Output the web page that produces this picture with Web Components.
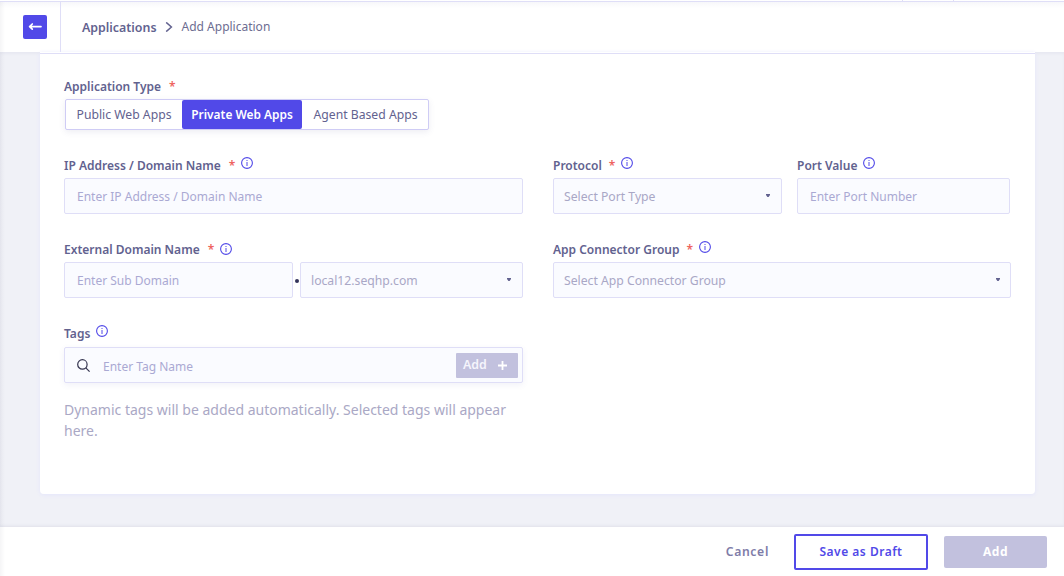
<!DOCTYPE html>
<html lang="en">
<head>
<meta charset="utf-8">
<title>Add Application</title>
<style>
    html, body {
        margin: 0;
        height: 576px;
        overflow: hidden;
    }
    body {
        --primary: #5149e8;
        --text: #62628f;
        --muted: #a9a7c6;
        --line: #dfdef7;
        --field: #fafbff;
        --disabled: #c2c1de;
        background: #f0f1f7;
        color: var(--text);
        font-family: "Noto Sans", sans-serif;
        font-size: 12px;
    }
</style>
</head>
<body>
<app-page>
    <page-header slot="header" parent="Applications" current="Add Application"></page-header>

    <form-field class="type" label="Application Type" required no-info>
        <segmented-control>
            <segment-item>Public Web Apps</segment-item>
            <segment-item selected>Private Web Apps</segment-item>
            <segment-item>Agent Based Apps</segment-item>
        </segmented-control>
    </form-field>

    <form-row>
        <form-field label="IP Address / Domain Name" required style="width:459px">
            <text-box>Enter IP Address / Domain Name</text-box>
        </form-field>
        <form-field label="Protocol" required style="width:229px; --star-gap:7px">
            <select-box>Select Port Type</select-box>
        </form-field>
        <form-field label="Port Value" style="width:213px; margin-left:-15px">
            <text-box>Enter Port Number</text-box>
        </form-field>
    </form-row>

    <form-row>
        <form-field label="External Domain Name" required style="width:459px; --info-y:2px">
            <domain-parts>
                <text-box style="width:229px">Enter Sub Domain</text-box>
                <select-box style="width:223px">local12.seqhp.com</select-box>
            </domain-parts>
        </form-field>
        <form-field label="App Connector Group" required style="width:458px; --star-gap:7px">
            <select-box style="padding-right:10px">Select App Connector Group</select-box>
        </form-field>
    </form-row>

    <form-row>
        <form-field label="Tags" style="width:459px">
            <tag-input>Enter Tag Name</tag-input>
        </form-field>
    </form-row>
    <tag-hint>Dynamic tags will be added automatically. Selected tags will appear here.</tag-hint>

    <page-footer slot="footer">
        <action-button kind="text">Cancel</action-button>
        <action-button kind="outline">Save as Draft</action-button>
        <action-button kind="disabled">Add</action-button>
    </page-footer>
</app-page>

<script>
class BaseElement extends HTMLElement {
    constructor() {
        super();
        this.attachShadow({mode: "open"});
    }

    connectedCallback() {
        const template = document.createElement("template");
        template.innerHTML = `<style>:host{box-sizing:border-box} *{box-sizing:border-box}${this.getStyle()}</style>${this.getMarkup()}`;
        this.shadowRoot.replaceChildren(template.content.cloneNode(true));
    }

    getStyle() {
        return "";
    }

    getMarkup() {
        return "<slot></slot>";
    }
}

class AppPage extends BaseElement {
    getStyle() {
        return `
            :host { display: flex; flex-direction: column; height: 576px; position: relative; }
            main { flex: 1; padding: 0 29px 0 40px; box-shadow: inset 0 2px 3px rgba(80,80,140,.05); }
            .card {
                height: 442px;
                padding: 0 24px;
                background: linear-gradient(#fff 1px, var(--line) 1px, var(--line) 2px, #fff 2px);
                border-radius: 0 0 4px 4px;
                box-shadow: 0 1px 4px #e4e5fb;
            }
            .edge {
                position: absolute;
                inset: 2px auto 0 0;
                width: 5px;
                background: linear-gradient(90deg, rgba(60,60,90,.05), transparent);
            }
        `;
    }

    getMarkup() {
        return `
            <slot name="header"></slot>
            <main><div class="card"><slot></slot></div></main>
            <slot name="footer"></slot>
            <div class="edge"></div>
        `;
    }
}

class PageHeader extends BaseElement {
    getStyle() {
        return `
            :host { display: block; height: 52px; background: #fff; }
            .strip { height: 2px; border-bottom: 1px solid var(--line); display: flex; padding-left: 902px; gap: 50px; }
            .strip i { width: 1px; height: 1px; background: var(--line); }
            .bar { display: flex; align-items: center; height: 50px; background: linear-gradient(#f7f7fa, #fff 6px); }
            .back { width: 61px; height: 50px; padding: 13px 0 0 23px; border-right: 1px solid var(--line); }
            svg { display: block; }
            .back svg { border-radius: 2px; background: var(--primary); }
            nav { display: flex; align-items: center; padding-left: 21px; line-height: 18px; }
            b { font-weight: 600; font-size: 12.4px; margin-top: 2px; }
            nav svg { margin: 0 9px 0 8px; }
            .current { color: #6d6d91; }
        `;
    }

    getMarkup() {
        return `
            <div class="strip"><i></i><i></i></div>
            <div class="bar">
                <div class="back">
                    <svg width="24" height="24" viewBox="0 0 24 24" fill="none" stroke="#fff" stroke-width="1.7" stroke-linecap="round" stroke-linejoin="round"><path d="M18 11.6H6.8M9.3 9l-2.7 2.6 2.7 2.6"/></svg>
                </div>
                <nav>
                    <b>${this.getAttribute("parent")}</b>
                    <svg width="8" height="10" viewBox="0 0 8 10" fill="none" stroke="#62628f" stroke-width="1.5"><path d="M1.2 .4L6.4 5 1.2 9.6"/></svg>
                    <span class="current">${this.getAttribute("current")}</span>
                </nav>
            </div>
        `;
    }
}

class FormField extends BaseElement {
    getStyle() {
        return `
            :host { display: block; }
            :host(.type) { padding-top: 23px; }
            .label { display: flex; height: 24px; font-weight: 600; line-height: 24px; white-space: nowrap; }
            .star { color: #ee6460; margin-left: var(--star-gap, 8px); font-weight: 600; }
            .info { margin: 3px 0 0 6px; position: relative; top: var(--info-y, 0); }
        `;
    }

    getMarkup() {
        const star = this.hasAttribute("required") ? `<span class="star">*</span>` : "";
        const info = this.hasAttribute("no-info") ? "" : `
            <svg class="info" width="12" height="12" viewBox="0 0 12 12" fill="none" stroke="#5149e8">
                <circle cx="6" cy="6" r="5.4" stroke-width="1.1"/>
                <path d="M6 5v4M6 3v1" stroke-width="1"/>
            </svg>`;
        return `<div class="label"><span>${this.getAttribute("label")}</span>${star}${info}</div><slot></slot>`;
    }
}

class FormRow extends BaseElement {
    getStyle() {
        return `:host { display: flex; gap: 30px; height: 60px; margin-top: 24px; }`;
    }
}

class SegmentedControl extends BaseElement {
    getStyle() {
        return `
            :host {
                display: flex;
                width: 364px;
                height: 31px;
                margin-left: 1px;
                border: 1px solid #cfccf5;
                border-radius: 2px;
                background: #fff;
                box-shadow: 0 2px 6px rgba(80,80,140,.1);
            }
        `;
    }
}

class SegmentItem extends BaseElement {
    getStyle() {
        return `
            :host { flex: 0 0 116px; text-align: center; font-size: 12.2px; line-height: 30px; white-space: nowrap; }
            :host([selected]) { flex-basis: 120px; background: var(--primary); color: #fff; font-size: 11.9px; font-weight: 600; line-height: 28px; border-radius: 2px; }
            :host(:last-child) { flex: 1; padding-left: 1px; }
        `;
    }
}

class TextBox extends BaseElement {
    getStyle() {
        return `
            :host {
                display: flex;
                align-items: center;
                height: 36px;
                padding: 0 12px;
                border: 1px solid var(--line);
                border-radius: 2px;
                background: var(--field);
                color: #aaa9d3;
                line-height: 18px;
                white-space: nowrap;
            }
            .value { padding-top: 2px; }
        `;
    }

    getMarkup() {
        return `<span class="value"><slot></slot></span>`;
    }
}

class SelectBox extends TextBox {
    getStyle() {
        return super.getStyle() + `
            :host { padding: 0 11px 0 10px; justify-content: space-between; font-size: 12.2px; color: var(--muted); }
            svg { margin-bottom: 1px; }
        `;
    }

    getMarkup() {
        return super.getMarkup() + `<svg width="4" height="3" viewBox="0 0 4 3"><path d="M0 0h4v1L2.6 3H1.4L0 1z" fill="#62628f"/></svg>`;
    }
}

class DomainParts extends BaseElement {
    getStyle() {
        return `
            :host { display: grid; grid-template-columns: 229px 7px 223px; }
            .dot { grid-column: 2; grid-row: 1; width: 4px; height: 4px; margin: 17px 0 0 2px; border-radius: 50%; background: #33335a; }
            ::slotted(text-box) { grid-column: 1; grid-row: 1; }
            ::slotted(select-box) { grid-column: 3; grid-row: 1; }
        `;
    }

    getMarkup() {
        return `<slot></slot><span class="dot"></span>`;
    }
}

class TagInput extends TextBox {
    getStyle() {
        return super.getStyle() + `
            :host { margin-top: 1px; padding: 0 4px 0 12px; box-shadow: 0 2px 6px rgba(80,80,160,.08); }
            .text { flex: 1; padding: 3px 0 0 13px; }
            .add {
                display: flex;
                align-items: center;
                width: 62px;
                height: 25px;
                padding: 0 11px 0 7px;
                justify-content: space-between;
                background: var(--disabled);
                border-radius: 1px;
                color: #f5f5fc;
                font-size: 12.4px;
                font-weight: 600;
                line-height: 24px;
            }
        `;
    }

    getMarkup() {
        return `
            <svg width="13" height="13" viewBox="0 0 13 13" fill="none" stroke="#34344f" stroke-width="1.2"><circle cx="5.4" cy="5.4" r="4.7"/><path d="M8.8 8.8l3.8 3.8"/></svg>
            <span class="text"><slot></slot></span>
            <span class="add"><span>Add</span><svg width="9" height="9" viewBox="0 0 9 9" stroke="#fff" stroke-width="1.8"><path d="M4.5 0v9M0 4.5h9"/></svg></span>
        `;
    }
}

class TagHint extends BaseElement {
    getStyle() {
        return `:host { display: block; width: 459px; margin-top: 17px; font-size: 14px; line-height: 21px; color: #aaa8c5; }`;
    }
}

class PageFooter extends BaseElement {
    getStyle() {
        return `
            :host {
                display: flex;
                align-items: center;
                justify-content: flex-end;
                gap: 16px;
                height: 49px;
                padding: 1px 17px 0 0;
                background: #fff;
                box-shadow: 0 -1px 3px rgba(80,80,120,.1);
            }
        `;
    }
}

class ActionButton extends BaseElement {
    getStyle() {
        return `
            :host { display: block; text-align: center; font-weight: 600; letter-spacing: .5px; border-radius: 2px; height: 32px; line-height: 32px; white-space: nowrap; }
            :host([kind=text]) { margin-right: 9px; font-size: 12.2px; letter-spacing: .65px; color: #7e7ca8; }
            :host([kind=outline]) { width: 134px; height: 36px; border: 2px solid var(--primary); color: var(--primary); }
            :host([kind=disabled]) { width: 103px; background: var(--disabled); color: #fff; font-weight: 700; }
        `;
    }
}

customElements.define("app-page", AppPage);
customElements.define("page-header", PageHeader);
customElements.define("form-field", FormField);
customElements.define("form-row", FormRow);
customElements.define("segmented-control", SegmentedControl);
customElements.define("segment-item", SegmentItem);
customElements.define("text-box", TextBox);
customElements.define("select-box", SelectBox);
customElements.define("domain-parts", DomainParts);
customElements.define("tag-input", TagInput);
customElements.define("tag-hint", TagHint);
customElements.define("page-footer", PageFooter);
customElements.define("action-button", ActionButton);
</script>
</body>
</html>
